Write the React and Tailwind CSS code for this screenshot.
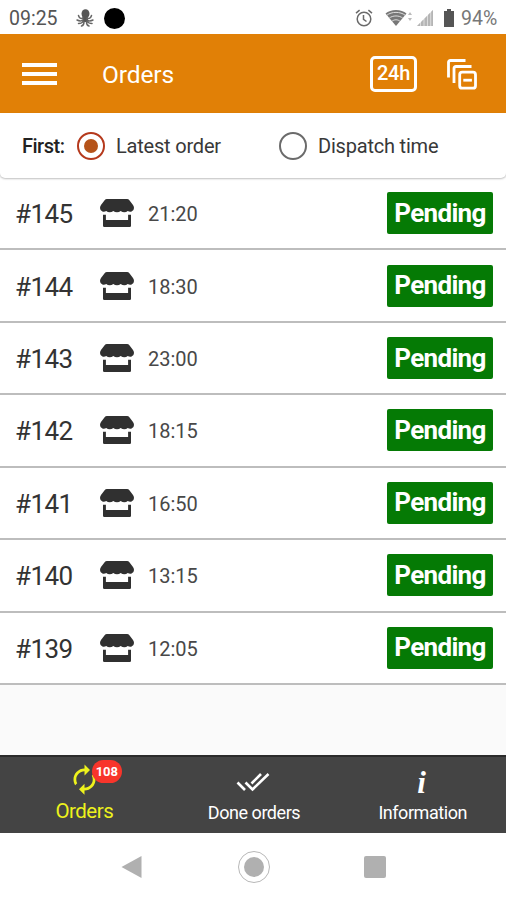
import { MdAutorenew } from 'react-icons/md';

const orders = [
  { id: 145, time: '21:20' },
  { id: 144, time: '18:30' },
  { id: 143, time: '23:00' },
  { id: 142, time: '18:15' },
  { id: 141, time: '16:50' },
  { id: 140, time: '13:15' },
  { id: 139, time: '12:05' },
];

function OctopusIcon() {
  return (
    <svg width="18" height="18" viewBox="0 0 18 18" fill="none" stroke="#666" strokeWidth="1.5" strokeLinecap="round">
      <ellipse cx="9.500" cy="4.800" rx="4" ry="4.500" fill="#555" stroke="none" />
      <path d="M6.500 6h5.500v7H6.500z" fill="#555" stroke="none" />
      <path d="M7 9C5 10 3 9 2.500 6.500M11 9c2 1 4 0 4.500-2.500M7 11c-2 1.500-5 .5-6 0M11 11c2 1.500 5 .5 6 0M7 12.500c-1 2-3 2-4.500 2M11.500 12.500c1 2 3 2 4.500 2M8 13c0 2-.5 3.500-2.500 4M10.500 13c0 2 .5 3.500 2.500 4" />
    </svg>
  );
}

function AlarmIcon() {
  return (
    <svg width="18" height="18" viewBox="0 0 18 18" fill="none" stroke="#6a6a6a" strokeWidth="1.5">
      <circle cx="9" cy="10" r="6.800" />
      <path d="M8.500 6v4.300l3 2.200M1 4.200l3.600-3M17 4.200l-3.600-3" />
    </svg>
  );
}

function WifiIcon() {
  return (
    <svg width="28" height="18" viewBox="0 0 28 18" fill="none">
      <path d="M.5 4.500C5.500-.3 16.500-.3 21.500 4.500L11 17z" fill="#777" />
      <path d="M1.800 6.300C6.500 2.400 15.500 2.400 20.200 6.300M4.200 9.200C7.500 6.200 14.500 6.200 17.800 9.200M7 12.300C9 10.300 13 10.300 15 12.300" stroke="#ddd" strokeWidth="1" />
      <path d="M23 6l2-3 2 3zM23 9l2 3 2-3z" fill="#bbb" />
    </svg>
  );
}

function SignalIcon() {
  return (
    <svg width="17" height="17" viewBox="0 0 17 17">
      <path d="M0 16L16 0v16z" fill="#ddd" />
      <path d="M0 16l3-3v3zM4 12l2.500-2.500V16H4zM7.500 8.500L10 6v10H7.500zM11 5l2.200-2.200V16H11zM14.200 1.800L16 0v16h-1.800z" fill="#b5b5b5" />
    </svg>
  );
}

function BatteryIcon() {
  return (
    <svg width="10" height="18" viewBox="0 0 10 18" fill="#555">
      <path d="M3 0h4v2h3v16H0V2h3z" />
    </svg>
  );
}

function CollapseIcon() {
  return (
    <svg width="30" height="31" viewBox="0 0 30 31" fill="none" stroke="#fff" strokeWidth="2.800">
      <path d="M1.500 18.500V3.500Q1.500 1.500 3.500 1.500H18.500M7 24V9.500Q7 7.500 9 7.500H24.500" />
      <rect x="12.700" y="13.200" width="15.800" height="16" rx="2.500" />
      <path d="M16.300 21.200h8.600" />
    </svg>
  );
}

function StoreIcon() {
  return (
    <svg width="34" height="28" viewBox="0 0 34 28" fill="#303030">
      <path d="M7 0h20q1.500 0 2.400 1.200L33 6q1 1.400 1 3 0 2.600-2.400 3.500-2 .6-3.800-.5-1.600 1.200-3.500 1.200T20.700 12q-1.600 1.300-3.700 1.300T13.300 12q-1.600 1.200-3.600 1.200T6.200 12q-1.800 1.100-3.800.5Q0 11.600 0 9q0-1.600 1-3l3.600-4.800Q5.500 0 7 0z" />
      <path d="M3 15.800h2.900V21h22.200v-5.200H31v11q0 1.200-1.200 1.200H4.200Q3 28 3 26.800z" />
    </svg>
  );
}

function DoneAllIcon() {
  return (
    <svg width="34" height="22" viewBox="0 0 34 22" fill="none" stroke="#fff" strokeWidth="2.600">
      <path d="M1.500 11.500l7.500 7.500M9.500 11.500l7 7L32.500 3M15.500 12.500L25 3" />
    </svg>
  );
}

function StatusBar() {
  return (
    <div className="flex h-[34px] items-center justify-between bg-white pt-[2px] pl-[9px] pr-2 text-[19.500px] text-[#555]">
      <div className="flex items-center">
        <span className="w-[50px] pt-px">09:25</span>
        <span className="ml-[17px]"><OctopusIcon /></span>
        <span className="ml-[10px] size-[21px] rounded-full bg-black" />
      </div>
      <div className="flex items-center">
        <AlarmIcon />
        <span className="ml-3"><WifiIcon /></span>
        <span className="ml-1"><SignalIcon /></span>
        <span className="ml-[10px]"><BatteryIcon /></span>
        <span className="ml-[7px] w-[37px] pt-px text-[#777]">94%</span>
      </div>
    </div>
  );
}

function Header() {
  return (
    <header className="flex h-[79px] items-center bg-[#e18006] pl-[22px] pr-[29px] text-white">
      <button className="flex w-[35px] flex-col gap-[5px]">
        <span className="h-[4px] w-full bg-white" />
        <span className="h-[4px] w-full bg-white" />
        <span className="h-[4px] w-full bg-white" />
      </button>
      <h1 className="ml-[45px] pt-[3px] text-[24.500px] tracking-[-0.1px]">Orders</h1>
      <button className="ml-auto flex h-9 w-[47px] items-center justify-center rounded-[5px] border-3 border-white pb-px text-[20px] font-medium tracking-[-0.3px]">
        24h
      </button>
      <button className="ml-[30px] pt-0.5">
        <CollapseIcon />
      </button>
    </header>
  );
}

function SortBar() {
  return (
    <div className="relative flex h-[65px] items-center rounded-b-[5px] bg-white pl-[22px] text-[20px] tracking-[-0.2px] text-[#383838] shadow-[0_1px_2px_rgba(0,0,0,0.25)]">
      <span className="w-[55px] font-medium tracking-[-0.5px] text-[#222]">First:</span>
      <span className="flex size-7 items-center justify-center rounded-full border-[2.500px] border-[#b5391c]">
        <span className="size-[14px] rounded-full bg-[#b5531a]" />
      </span>
      <span className="ml-[11px] w-[163px]">Latest order</span>
      <span className="size-7 rounded-full border-[2.500px] border-[#6b6b6b]" />
      <span className="ml-[11px]">Dispatch time</span>
    </div>
  );
}

function OrderRow({ order }) {
  return (
    <li className="flex items-center border-b-2 border-[#bdbdbd] bg-white pl-[15px] pr-[13px] text-[#333]">
      <span className="w-[85px] pt-[3px] text-[26px] tracking-[-0.6px]">#{order.id}</span>
      <StoreIcon />
      <span className="ml-[14px] pt-0.5 text-[20px] text-[#484848]">{order.time}</span>
      <span className="ml-auto flex h-[42px] w-[106px] items-center justify-center rounded-[2px] bg-[#057a05] text-[26px] font-bold tracking-[-0.7px] text-white">
        Pending
      </span>
    </li>
  );
}

function TabBar() {
  return (
    <nav className="grid h-[78px] grid-cols-3 border-t-2 border-[#2b2b2b] bg-[#444] text-white">
      <div className="flex flex-col items-center pt-[6px] text-[#eef21c]">
        <span className="relative">
          <MdAutorenew size={33} />
          <span className="absolute -top-[3px] left-[24px] flex h-[23px] w-[30px] items-center justify-center rounded-full bg-[#f8352b] text-[13px] font-bold text-white">
            108
          </span>
        </span>
        <span className="mt-[3px] text-[20.500px] leading-6 tracking-[-0.5px]">Orders</span>
      </div>
      <div className="flex flex-col items-center pt-[14px]">
        <DoneAllIcon />
        <span className="mt-2 pl-0.5 text-[18px] leading-6 tracking-[-0.45px]">Done orders</span>
      </div>
      <div className="flex flex-col items-center pt-[11px]">
        <span className="h-[26px] font-['Liberation_Serif',serif] text-[31px] leading-[30px] font-bold italic">i</span>
        <span className="mt-[7px] pl-0.5 text-[18px] leading-6 tracking-[-0.45px]">Information</span>
      </div>
    </nav>
  );
}

function SystemNav() {
  return (
    <div className="flex h-[67px] items-center bg-white pl-[121px]">
      <svg width="21" height="24" viewBox="0 0 21 24" fill="#b0b0b0">
        <path d="M20.500 1v22L.5 12z" />
      </svg>
      <span className="ml-24 flex size-8 items-center justify-center rounded-full border-[1.500px] border-[#b8b8b8]">
        <span className="size-5 rounded-full bg-[#b0b0b0]" />
      </span>
      <span className="ml-[94px] size-[22px] rounded-[2px] bg-[#b0b0b0]" />
    </div>
  );
}

export default function App() {
  return (
    <div className="flex h-[900px] w-[506px] flex-col overflow-hidden bg-[#fafafa] font-[Roboto,sans-serif]">
      <StatusBar />
      <Header />
      <SortBar />
      <ul className="grid h-[507px] grid-rows-7">
        {orders.map((order) => (
          <OrderRow key={order.id} order={order} />
        ))}
      </ul>
      <div className="mt-auto">
        <TabBar />
        <SystemNav />
      </div>
    </div>
  );
}
